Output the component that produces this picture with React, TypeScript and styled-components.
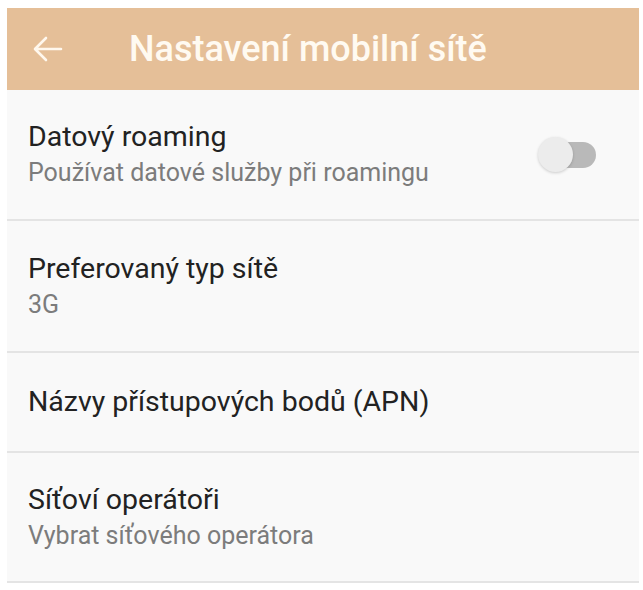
import React from "react";
import styled, { createGlobalStyle } from "styled-components";

const GlobalStyle = createGlobalStyle`
  html, body {
    margin: 0;
    background: #ffffff;
  }
  body {
    font-family: Roboto, "Noto Sans", "Liberation Sans", sans-serif;
  }
`;

const Screen = styled.div`
  padding: 8px 4px 0 7px;
`;

const Toolbar = styled.header`
  height: 82px;
  background: #e5bf98;
  display: flex;
  align-items: center;
  padding-left: 26px;
  gap: 66px;
`;

const BackButton = styled.button`
  border: none;
  background: none;
  padding: 0;
  display: flex;
  align-items: center;
  cursor: pointer;
`;

const Title = styled.h1`
  margin: 0;
  font-size: 36px;
  font-weight: 500;
  color: #fffaf1;
`;

const List = styled.div`
  background: #f9f9f9;
  display: flex;
  flex-direction: column;
`;

const Row = styled.div<{ $height: number }>`
  height: ${({ $height }) => $height}px;
  display: flex;
  align-items: center;
  justify-content: space-between;
  padding: 0 20px 0 21px;
  border-bottom: 2px solid #e4e4e4;
`;

const Texts = styled.div`
  display: flex;
  flex-direction: column;
  gap: 5px;
`;

const Primary = styled.div`
  font-size: 28.5px;
  line-height: 32px;
  color: #222222;
`;

const Secondary = styled.div`
  font-size: 25px;
  line-height: 30px;
  color: #7c7c7c;
`;

const Switch = styled.div`
  position: relative;
  width: 58px;
  height: 36px;
  margin-right: 23px;
`;

const Track = styled.div`
  position: absolute;
  right: 0;
  top: 5px;
  width: 40px;
  height: 26px;
  border-radius: 13px;
  background: #b9b9b9;
`;

const Knob = styled.div`
  position: absolute;
  left: 0;
  top: 0;
  width: 35px;
  height: 35px;
  border-radius: 50%;
  background: #ececec;
  box-shadow: 0 1px 3px rgba(0, 0, 0, 0.18);
`;

const Arrow = () => (
  <svg width="30" height="26" viewBox="0 0 30 26" fill="none">
    <path
      d="M28 13H3M13 2L2 13l11 11"
      stroke="#fff8ee"
      strokeWidth="2.6"
      strokeLinecap="round"
      strokeLinejoin="round"
    />
  </svg>
);

type Item = {
  title: string;
  subtitle?: string;
  height: number;
  toggle?: boolean;
};

const items: Item[] = [
  {
    title: "Datový roaming",
    subtitle: "Používat datové služby při roamingu",
    height: 129,
    toggle: true,
  },
  { title: "Preferovaný typ sítě", subtitle: "3G", height: 130 },
  { title: "Názvy přístupových bodů (APN)", height: 98 },
  {
    title: "Síťoví operátoři",
    subtitle: "Vybrat síťového operátora",
    height: 128,
  },
];

export default function App() {
  return (
    <>
      <GlobalStyle />
      <Screen>
        <Toolbar>
          <BackButton aria-label="Zpět">
            <Arrow />
          </BackButton>
          <Title>Nastavení mobilní sítě</Title>
        </Toolbar>
        <List>
          {items.map((item) => (
            <Row key={item.title} $height={item.height}>
              <Texts>
                <Primary>{item.title}</Primary>
                {item.subtitle && <Secondary>{item.subtitle}</Secondary>}
              </Texts>
              {item.toggle && (
                <Switch>
                  <Track />
                  <Knob />
                </Switch>
              )}
            </Row>
          ))}
        </List>
      </Screen>
    </>
  );
}
